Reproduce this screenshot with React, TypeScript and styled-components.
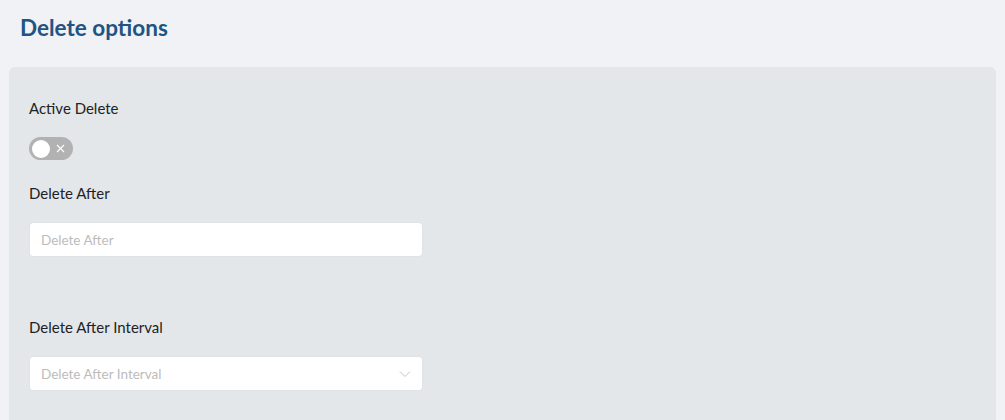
import React from 'react';
import styled, {createGlobalStyle} from 'styled-components';

const GlobalStyle = createGlobalStyle`
  html, body {
    margin: 0;
    padding: 0;
    background: #f0f2f5;
    font-family: Lato, "Open Sans", sans-serif;
  }
`;

const Page = styled.div`
    padding: 14px 9px 0 9px;
    height: 420px;
    overflow: hidden;
    box-sizing: border-box;
`;

const Title = styled.h2`
    margin: 0 0 25px 11px;
    font-size: 22.5px;
    line-height: 28px;
    font-weight: 700;
    color: #215482;
`;

const Card = styled.div`
    background: #e4e7ea;
    border-radius: 6px 6px 0 0;
    padding: 31px 20px 40px 20px;
    min-height: 400px;
    display: flex;
    flex-direction: column;
`;

const Field = styled.div<{gap?: number}>`
    display: flex;
    flex-direction: column;
    margin-bottom: ${props => props.gap ?? 0}px;
`;

const Label = styled.label`
    font-size: 15px;
    line-height: 20px;
    color: #222;
    margin-bottom: 19px;
`;

const Toggle = styled.div`
    width: 44px;
    height: 23px;
    border-radius: 12px;
    background: #b2b2b2;
    display: flex;
    align-items: center;
    padding: 0 3px;
    box-sizing: border-box;
    gap: 6px;
`;

const Knob = styled.span`
    width: 18px;
    height: 18px;
    border-radius: 50%;
    background: #fff;
`;

const Input = styled.input`
    width: 394px;
    height: 35px;
    box-sizing: border-box;
    border: 1px solid #dfe2e6;
    border-radius: 4px;
    background: #fff;
    padding: 0 11px;
    font-family: inherit;
    font-size: 13.5px;
    outline: none;
    &::placeholder {
        color: #bcbcbc;
    }
`;

const Select = styled.div`
    width: 394px;
    height: 35px;
    box-sizing: border-box;
    border: 1px solid #dfe2e6;
    border-radius: 4px;
    background: #fff;
    padding: 0 11px;
    display: flex;
    align-items: center;
    justify-content: space-between;
    font-size: 13.5px;
    color: #bcbcbc;
`;

const App = () => {
    return (
        <>
            <GlobalStyle />
            <Page>
                <Title>Delete options</Title>
                <Card>
                    <Field gap={23}>
                        <Label>Active Delete</Label>
                        <Toggle>
                            <Knob />
                            <svg width="9" height="9" viewBox="0 0 9 9">
                                <path d="M1 1L8 8M8 1L1 8" stroke="#fff" strokeWidth="1.2" />
                            </svg>
                        </Toggle>
                    </Field>
                    <Field gap={60}>
                        <Label>Delete After</Label>
                        <Input placeholder="Delete After" />
                    </Field>
                    <Field>
                        <Label>Delete After Interval</Label>
                        <Select>
                            <span>Delete After Interval</span>
                            <svg width="12" height="8" viewBox="0 0 12 8">
                                <path d="M1 1.5L6 6.5L11 1.5" stroke="#c4c4c4" strokeWidth="1" fill="none" />
                            </svg>
                        </Select>
                    </Field>
                </Card>
            </Page>
        </>
    );
};

export default App;
